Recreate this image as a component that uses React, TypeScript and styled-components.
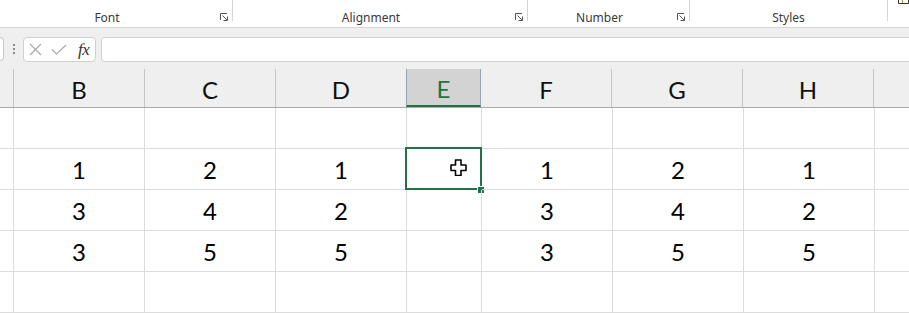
import { createGlobalStyle, styled } from 'styled-components';

const GlobalStyle = createGlobalStyle`
  html, body {
    margin: 0;
    padding: 0;
    background: #fff;
    overflow: hidden;
  }
  * {
    box-sizing: border-box;
  }
`;

const GREEN = '#217346';
const GRID = '#dcdcdc';

const Window = styled.div`
  width: 909px;
  height: 313px;
  overflow: hidden;
  font-family: Lato, 'Noto Sans', sans-serif;
`;

/* ---------- ribbon group captions ---------- */

const Ribbon = styled.div`
  display: flex;
  height: 28px;
  background: #fff;
  border-bottom: 1px solid #d6d6d6;
`;

const Group = styled.div<{ $width: number }>`
  display: flex;
  width: ${(p) => p.$width}px;
  flex: none;
  height: 21px;
  border-right: 1px solid #d4d4d4;
`;

const GroupLabel = styled.div`
  flex: 1;
  text-align: center;
  padding-top: 10px;
  font-family: 'Noto Sans', 'Open Sans', sans-serif;
  font-size: 12px;
  line-height: 15px;
  color: #3a3a3a;
`;

const LauncherSlot = styled.div`
  width: 18px;
  display: flex;
  justify-content: flex-end;
  align-items: flex-end;
  padding-right: 3px;
`;

const RibbonTail = styled.div`
  flex: 1;
  display: flex;
  justify-content: flex-end;
`;

const Launcher = () => (
  <LauncherSlot>
    <svg width="9" height="8" viewBox="0 0 9 8">
      <path d="M0.5 7V0.5H7" fill="none" stroke="#555" strokeWidth="1" />
      <path d="M2.5 2.5L7 7M7.5 3.5V7.5H3.5" fill="none" stroke="#555" strokeWidth="1" />
    </svg>
  </LauncherSlot>
);

/* ---------- formula bar ---------- */

const FormulaBar = styled.div`
  display: flex;
  align-items: flex-start;
  height: 34px;
  padding-top: 9px;
  background: #efefef;
`;

const NameBoxEdge = styled.div`
  width: 4px;
  height: 24px;
  background: #fff;
  border: 1px solid #c9c9c9;
  border-left: none;
  border-radius: 0 4px 4px 0;
`;

const Grip = styled.div`
  width: 19px;
  display: flex;
  flex-direction: column;
  align-items: center;
  gap: 2px;
  padding-top: 7px;

  > span {
    width: 2px;
    height: 2px;
    background: #8a8a8a;
  }
`;

const ButtonBox = styled.div`
  width: 73px;
  height: 25px;
  display: flex;
  align-items: center;
  padding-left: 5px;
  gap: 9px;
  background: #fff;
  border: 1px solid #cfcfcf;
  border-radius: 4px;
`;

const Fx = styled.span`
  font-family: 'Liberation Serif', serif;
  font-style: italic;
  font-size: 17px;
  color: #333;
  margin-left: 2px;
  letter-spacing: -0.5px;
`;

const FormulaInput = styled.div`
  flex: 1;
  height: 25px;
  margin-left: 5px;
  margin-right: -6px;
  background: #fff;
  border: 1px solid #cfcfcf;
  border-radius: 4px;
`;

/* ---------- grid ---------- */

const HeaderRow = styled.div`
  display: flex;
  align-items: flex-end;
  height: 46px;
  background: #efefef;
  border-bottom: 1px solid #ababab;
`;

const HeaderCell = styled.div<{ $width: number; $active?: boolean }>`
  width: ${(p) => p.$width}px;
  flex: none;
  height: 38px;
  display: flex;
  align-items: center;
  justify-content: center;
  padding-top: 3px;
  font-size: 24px;
  color: ${(p) => (p.$active ? GREEN : '#111')};
  background: ${(p) => (p.$active ? '#d3d3d3' : 'transparent')};
  border-right: 1px solid ${(p) => (p.$active ? '#9aa3ad' : '#c4c4c4')};
  border-left: ${(p) => (p.$active ? '1px solid #9aa3ad' : 'none')};
  margin-left: ${(p) => (p.$active ? '-1px' : '0')};
  border-bottom: ${(p) => (p.$active ? `2px solid ${GREEN}` : 'none')};
`;

const Row = styled.div`
  display: flex;
  height: 41px;
`;

const Cell = styled.div<{ $width: number }>`
  position: relative;
  width: ${(p) => p.$width}px;
  flex: none;
  height: 41px;
  display: flex;
  align-items: center;
  justify-content: center;
  padding-top: 1px;
  font-size: 24px;
  color: #000;
  border-right: 1px solid ${GRID};
  border-bottom: 1px solid ${GRID};
`;

const Selection = styled.div`
  position: absolute;
  top: -2px;
  left: -2px;
  right: -1px;
  bottom: -1px;
  border: 2px solid ${GREEN};
  pointer-events: none;
`;

const FillHandle = styled.div`
  position: absolute;
  right: -4px;
  bottom: -5px;
  width: 8px;
  height: 8px;
  background: ${GREEN};
  border: 1px solid #fff;
`;

const Cursor = styled.svg`
  position: absolute;
  left: 43px;
  top: 10px;
`;

const columns = [
  { key: 'A', width: 14 },
  { key: 'B', width: 131 },
  { key: 'C', width: 131 },
  { key: 'D', width: 131 },
  { key: 'E', width: 75 },
  { key: 'F', width: 131 },
  { key: 'G', width: 131 },
  { key: 'H', width: 131 },
  { key: 'I', width: 60 },
];

const rows: Record<string, string>[] = [
  {},
  { B: '1', C: '2', D: '1', F: '1', G: '2', H: '1' },
  { B: '3', C: '4', D: '2', F: '3', G: '4', H: '2' },
  { B: '3', C: '5', D: '5', F: '3', G: '5', H: '5' },
  {},
  {},
];

const groups = [
  { label: 'Font', width: 233, launcher: true },
  { label: 'Alignment', width: 295, launcher: true },
  { label: 'Number', width: 162, launcher: true },
  { label: 'Styles', width: 198, launcher: false },
];

export default function App() {
  return (
    <Window>
      <GlobalStyle />
      <Ribbon>
        {groups.map((g) => (
          <Group key={g.label} $width={g.width}>
            <GroupLabel>{g.label}</GroupLabel>
            {g.launcher && <Launcher />}
          </Group>
        ))}
        <RibbonTail>
          <svg width="11" height="4" viewBox="0 0 11 4">
            <path d="M0.5 0V3.5H10.5V0" fill="none" stroke="#333" strokeWidth="1" />
            <path d="M4.5 0V3" stroke="#c08a4a" strokeWidth="1" />
          </svg>
        </RibbonTail>
      </Ribbon>

      <FormulaBar>
        <NameBoxEdge />
        <Grip>
          <span />
          <span />
          <span />
        </Grip>
        <ButtonBox>
          <svg width="13" height="13" viewBox="0 0 13 13">
            <path d="M1 1L12 12M12 1L1 12" stroke="#a8a8a8" strokeWidth="1.1" />
          </svg>
          <svg width="16" height="11" viewBox="0 0 16 11">
            <path d="M1 5.5L5.5 10L15 1" fill="none" stroke="#a8a8a8" strokeWidth="1.1" />
          </svg>
          <Fx>fx</Fx>
        </ButtonBox>
        <FormulaInput />
      </FormulaBar>

      <HeaderRow>
        {columns.map((c) => (
          <HeaderCell key={c.key} $width={c.width} $active={c.key === 'E'}>
            {c.key === 'A' || c.key === 'I' ? '' : c.key}
          </HeaderCell>
        ))}
      </HeaderRow>

      {rows.map((r, i) => (
        <Row key={i}>
          {columns.map((c) => (
            <Cell key={c.key} $width={c.width}>
              {r[c.key] ?? ''}
              {i === 1 && c.key === 'E' && (
                <>
                  <Selection />
                  <FillHandle />
                  <Cursor width="17" height="17" viewBox="0 0 17 17">
                    <path
                      d="M5.5 1H11V6H16V11.5H11V16.5H5.5V11.5H1V6H5.5Z"
                      fill="#fff"
                      stroke="#000"
                      strokeWidth="1.6"
                      strokeLinejoin="round"
                    />
                  </Cursor>
                </>
              )}
            </Cell>
          ))}
        </Row>
      ))}
    </Window>
  );
}
